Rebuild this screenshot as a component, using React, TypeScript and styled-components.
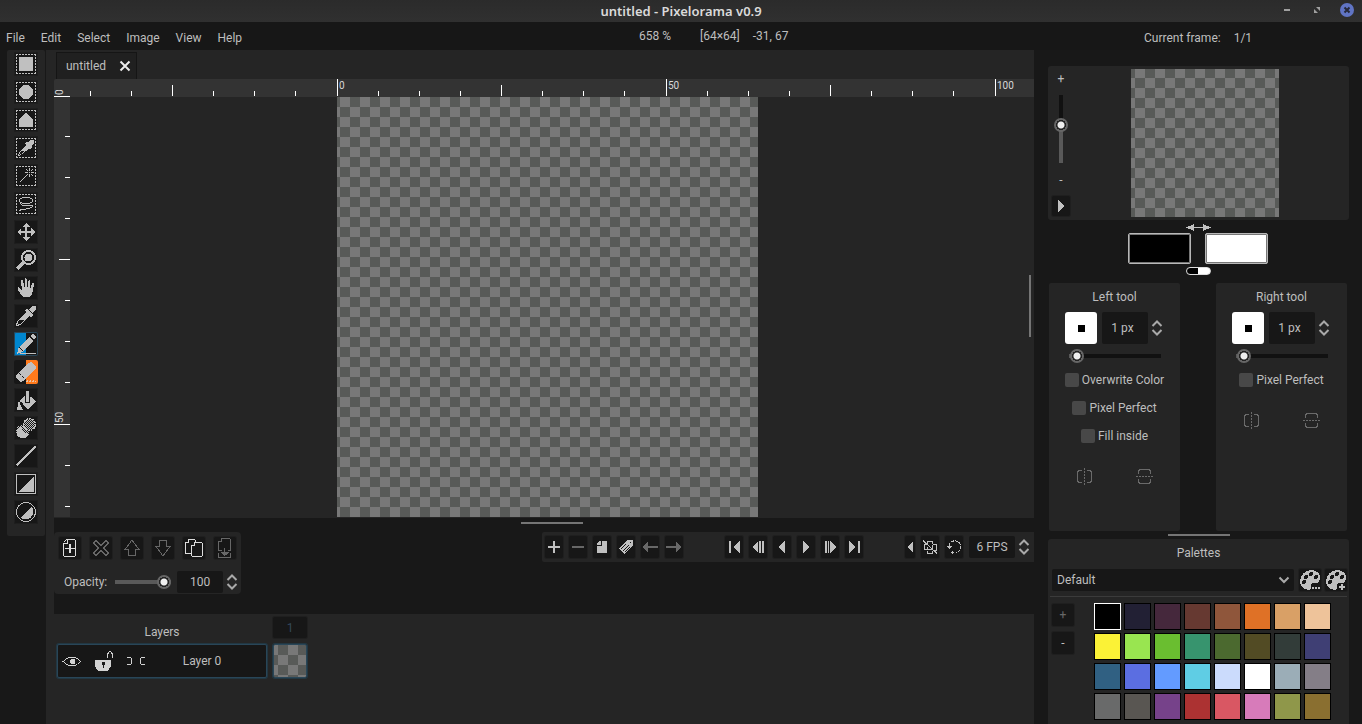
import React, { useState } from "react";
import styled, { createGlobalStyle, css } from "styled-components";

const c = {
  base: "#181818",
  panel: "#252525",
  well: "#171717",
  ruler: "#333333",
  icon: "#c0c0c0",
  dim: "#676767",
  text: "#bebebe",
  accent: "#294658",
  edge: "#1f1f1f",
};

const checker = (x: number, y: number) =>
  `conic-gradient(#787878 25%, #585a58 0 50%, #787878 0 75%, #585a58 0) ${x}px ${y}px / 20px 20px`;

const GlobalStyle = createGlobalStyle`
  * { box-sizing: border-box; }
  body { margin: 0; background: ${c.base}; }
  body, button, input, select { font: 12px/16px Roboto, "Noto Sans", sans-serif; color: ${c.text}; }
  button { padding: 0; border: 0; background: none; }
  input { margin: 0; }
  svg { display: block; }
`;

/* ---------- window frame ---------- */

const Window = styled.div`
  display: flex;
  flex-direction: column;
  height: 100vh;
  overflow: hidden;
  background: ${c.base};
`;

const TitleBar = styled.header`
  display: grid;
  grid-template-columns: 1fr auto 1fr;
  align-items: center;
  height: 22px;
  flex: none;
  background: linear-gradient(#2b2b2b, #303030);
`;

const WindowTitle = styled.h1`
  grid-column: 2;
  margin: 0;
  font: 600 13px/22px "Noto Sans", "Open Sans", sans-serif;
  color: #dadada;
`;

const WindowButtons = styled.div`
  display: flex;
  justify-content: flex-end;
  gap: 14px;
  padding-right: 7px;
  margin-top: -2px;
`;

const MenuBar = styled.div`
  display: flex;
  align-items: center;
  height: 28px;
  flex: none;
  background: ${c.well};
`;

const Menu = styled.nav`
  display: flex;
  flex: 1;
  gap: 16px;
  padding: 4px 0 0 6px;
`;

const Status = styled.div`
  display: flex;
  gap: 13px;
  flex: 0 0 395px;
  white-space: nowrap;
`;

const Zoom = styled.span`
  margin-right: 16px;
`;

const FrameStatus = styled.div`
  display: flex;
  gap: 13px;
  flex: 0 0 328px;
  padding: 4px 0 0 110px;
`;

const Workspace = styled.div`
  display: flex;
  flex: 1;
  min-height: 0;
`;

/* ---------- shared controls ---------- */

const Well = styled.button<{ $w?: number; $h?: number }>`
  display: flex;
  align-items: center;
  justify-content: center;
  flex: none;
  width: ${(p) => p.$w ?? 22}px;
  height: ${(p) => p.$h ?? 22}px;
  border-radius: 2px;
  background: ${c.well};
  color: ${c.icon};
  box-shadow: 0 0 0 1px ${c.edge};
  &:disabled { color: ${c.dim}; }
`;

const SpinBox = styled.div`
  display: flex;
  align-items: center;
  gap: 2px;
`;

const SpinInput = styled.input<{ $h?: number; $shift?: number }>`
  width: 46px;
  height: ${(p) => p.$h ?? 22}px;
  padding: 0 ${(p) => p.$shift ?? 0}px 0 0;
  border: 0;
  border-radius: 2px;
  background: ${c.well};
  text-align: center;
`;

const SpinArrows = styled.button`
  display: grid;
  place-items: center;
  width: 14px;
  height: 22px;
  color: #a9a9a9;
`;

const Range = styled.input<{ $fill: number; $vertical?: boolean }>`
  appearance: none;
  background: none;
  ${(p) =>
    p.$vertical
      ? css`writing-mode: vertical-lr; direction: rtl; width: 14px; height: 68px;`
      : css`width: 100%; height: 14px;`}
  &::-webkit-slider-runnable-track {
    ${(p) => (p.$vertical ? "width: 4px; height: 100%;" : "height: 4px; width: 100%;")}
    background: linear-gradient(
      ${(p) => (p.$vertical ? "to top" : "to right")},
      #595959 ${(p) => p.$fill}%,
      #111111 ${(p) => p.$fill}%
    );
  }
  &::-webkit-slider-thumb {
    appearance: none;
    width: 14px;
    height: 14px;
    margin: ${(p) => (p.$vertical ? "0 -5px" : "-5px 0")};
    border-radius: 50%;
    background: radial-gradient(circle, #eeeeee 3px, #222222 4px, #222222 5px, #666666 5px, #666666 7px);
  }
`;

const Grabber = styled.div<{ $h: number; $top: number; $inset?: number }>`
  display: flex;
  justify-content: center;
  flex: none;
  height: ${(p) => p.$h}px;
  padding: ${(p) => p.$top}px 0 0 ${(p) => p.$inset ?? 0}px;
  &::before {
    content: "";
    width: 62px;
    height: 2px;
    background: #757575;
  }
`;

/* ---------- tool strip ---------- */

const ToolStrip = styled.aside`
  display: flex;
  flex-direction: column;
  align-self: flex-start;
  align-items: center;
  gap: 4px;
  flex: none;
  width: 38px;
  margin: 0 1px 0 7px;
  padding: 2px 0 12px;
  border-radius: 2px;
  background: ${c.panel};
`;

const ToolButton = styled.button<{ $slot?: "left" | "right" }>`
  width: 24px;
  height: 24px;
  border-radius: 2px;
  color: ${c.icon};
  background: ${(p) =>
    p.$slot === "left"
      ? `linear-gradient(to right, #0086cf 50%, ${c.well} 50%)`
      : p.$slot === "right"
      ? `linear-gradient(to right, ${c.well} 50%, #ff7a1c 50%)`
      : c.well};
  box-shadow: inset 0 0 0 1px ${(p) => (p.$slot === "left" ? c.accent : p.$slot ? "transparent" : c.edge)};
`;

const Gutter = styled.div`
  flex: 0 0 8px;
  background: ${c.panel};
`;

/* ---------- canvas area ---------- */

const Center = styled.main`
  display: flex;
  flex-direction: column;
  flex: 1;
  min-width: 0;
`;

const CanvasPanel = styled.section`
  position: relative;
  display: flex;
  flex-direction: column;
  flex: 1;
  min-height: 0;
  background: ${c.panel};
`;

const Tabs = styled.div`
  display: flex;
  align-items: flex-end;
  flex: none;
  height: 29px;
  padding-left: 2px;
`;

const Tab = styled.div`
  display: flex;
  align-items: center;
  gap: 13px;
  height: 27px;
  padding: 0 5px 0 9px;
  border: 1px solid #151515;
  border-bottom: 0;
  background: #202020;
`;

const TabClose = styled.button`
  color: #ececec;
`;

const TopRuler = styled.div`
  display: flex;
  flex: none;
  height: 18px;
  background: ${c.ruler};
  border-radius: 2px 0 0 0;
  overflow: hidden;
`;

const CanvasRow = styled.div`
  display: flex;
  flex: 1;
  min-height: 0;
`;

const SideRuler = styled.div`
  flex: 0 0 16px;
  background: ${c.ruler};
  margin-bottom: 1px;
  overflow: hidden;
`;

const Viewport = styled.div`
  flex: 1;
  overflow: hidden;
  padding-left: 267px;
`;

const Artwork = styled.div`
  width: 421px;
  height: 420px;
  background: ${checker(-7, 0)};
`;

const SideGrabber = styled.div`
  position: absolute;
  right: 3px;
  top: 225px;
  width: 2px;
  height: 62px;
  background: #757575;
`;

/* ---------- timeline ---------- */

const TimelineTop = styled.section`
  display: flex;
  align-items: flex-start;
  justify-content: space-between;
  flex: none;
  height: 82px;
`;

const LayerTools = styled.div`
  width: 187px;
  padding: 5px 5px 1px;
  border-radius: 4px;
  background: ${c.panel};
`;

const LayerButtons = styled.div`
  display: flex;
  justify-content: space-between;
  margin-bottom: 12px;
`;

const OpacityRow = styled.div`
  display: flex;
  align-items: center;
  padding-left: 5px;
  margin-right: -6px;
  white-space: nowrap;
`;

const OpacitySlider = styled.div`
  display: flex;
  width: 56px;
  margin: 0 6px 0 8px;
`;

const AnimationBar = styled.div`
  display: flex;
  align-items: center;
  width: 492px;
  height: 30px;
  padding-left: 3px;
  border-radius: 2px 0 0 2px;
  background: ${c.panel};
`;

const ButtonGroup = styled.div`
  display: flex;
  gap: 6px;
  margin-right: 42px;
  &:last-child { margin-right: 0; }
`;

const LayersPanel = styled.section`
  display: grid;
  grid-template-columns: 210px 34px;
  grid-template-rows: 21px 34px;
  gap: 6px;
  flex: none;
  height: 110px;
  padding: 3px;
  background: ${c.panel};
`;

const LayersTitle = styled.h2`
  margin: 0;
  padding-top: 7px;
  font: inherit;
  text-align: center;
`;

const FrameButton = styled.button`
  border-radius: 2px;
  background: ${c.well};
  color: #34485a;
  box-shadow: 0 0 0 1px ${c.edge};
`;

const LayerRow = styled.div`
  display: flex;
  align-items: center;
  border: 1px solid ${c.accent};
  box-shadow: 0 0 0 1px #223742;
  border-radius: 2px;
  background: ${c.well};
`;

const LayerName = styled.span`
  flex: 1;
  padding-right: 16px;
  text-align: center;
`;

const LayerToggle = styled.button`
  width: 27px;
  margin-right: 5px;
  display: grid;
  place-items: center;
  color: #d2d2d2;
`;

const Cel = styled.button`
  border: 1px solid ${c.accent};
  box-shadow: 0 0 0 1px #223742;
  border-radius: 2px;
  background: ${checker(-16, 0)};
`;

/* ---------- right column ---------- */

const RightColumn = styled.aside`
  display: flex;
  flex-direction: column;
  flex: 0 0 301px;
  margin: 16px 13px 0 14px;
`;

const Preview = styled.section`
  display: flex;
  height: 154px;
  flex: none;
  padding: 3px 4px;
  border-radius: 3px;
  background: ${c.panel};
`;

const PreviewSide = styled.div`
  display: flex;
  flex-direction: column;
  align-items: center;
  width: 18px;
  padding-top: 2px;
  text-align: center;
`;

const PreviewSlider = styled.div`
  margin: 8px 0 9px;
  height: 68px;
`;

const PreviewImage = styled.div`
  width: 148px;
  height: 148px;
  margin-left: 61px;
  background: ${checker(-6, -1)};
`;

const PlayGap = styled.div`
  margin-top: 8px;
`;

const ColorPickers = styled.section`
  display: flex;
  flex-direction: column;
  align-items: center;
  flex: none;
  height: 63px;
  padding-top: 3px;
`;

const ColorPair = styled.div`
  display: flex;
  gap: 14px;
  margin: 1px 1px 3px 0;
`;

const ColorButton = styled.button<{ $color: string }>`
  width: 63px;
  height: 31px;
  border: 1px solid #b8b8b8;
  box-shadow: inset 0 0 0 1px #777777;
  border-radius: 2px;
  background: ${(p) => p.$color};
`;

const DefaultColors = styled.button`
  width: 25px;
  height: 8px;
  border: 1px solid #dddddd;
  border-radius: 4px;
  background: linear-gradient(to right, #000 48%, #fff 48%);
`;

const ToolPanels = styled.div`
  display: flex;
  justify-content: space-between;
  flex: 1;
  padding: 0 2px 0 1px;
`;

const ToolPanel = styled.section`
  display: flex;
  flex-direction: column;
  align-items: center;
  width: 131px;
  border-radius: 2px;
  background: ${c.panel};
`;

const PanelTitle = styled.h2`
  margin: 0;
  padding: 6px 0 7px;
  font: inherit;
`;

const BrushRow = styled.div`
  display: flex;
  gap: 5px;
`;

const BrushButton = styled.button`
  display: grid;
  place-items: center;
  width: 32px;
  height: 32px;
  border-radius: 3px;
  background: #ffffff;
`;

const BrushSlider = styled.div`
  display: flex;
  width: 92px;
  margin: 5px 0 7px;
`;

const Options = styled.div`
  display: flex;
  flex-direction: column;
  align-items: center;
  gap: 8px;
`;

const CheckLabel = styled.label`
  display: flex;
  align-items: center;
  gap: 3px;
  height: 20px;
`;

const CheckInput = styled.input`
  appearance: none;
  width: 14px;
  height: 14px;
  border-radius: 2px;
  background: #484848;
  &:checked { background: #8a8a8a; }
`;

const MirrorRow = styled.div`
  display: flex;
  gap: 43px;
  margin-top: 22px;
`;

const MirrorButton = styled.button`
  color: #6a6a6a;
`;

const Palettes = styled.section`
  flex: none;
  height: 185px;
  padding: 0 2px;
  border-radius: 3px 3px 0 0;
  background: ${c.panel};
`;

const PaletteTitle = styled.h2`
  margin: 0;
  padding: 6px 0 8px;
  font: inherit;
  text-align: center;
`;

const PaletteBar = styled.div`
  display: flex;
  gap: 4px;
  padding: 0 0 5px 2px;
  border-bottom: 1px solid #3b3b3b;
`;

const SelectBox = styled.div`
  position: relative;
  flex: 1;
  margin-right: 1px;
`;

const Select = styled.select`
  appearance: none;
  width: 100%;
  height: 22px;
  padding: 0 5px;
  border: 0;
  border-radius: 2px;
  background: ${c.well};
`;

const SelectArrow = styled.svg`
  position: absolute;
  right: 4px;
  top: 7px;
  pointer-events: none;
`;

const PaletteBody = styled.div`
  display: flex;
  gap: 20px;
  padding: 6px 2px 0;
`;

const PaletteButtons = styled.div`
  display: flex;
  flex-direction: column;
  gap: 6px;
  padding-top: 1px;
`;

const Swatches = styled.div`
  display: grid;
  grid-template-columns: repeat(8, 27px);
  grid-auto-rows: 27px;
  gap: 3px;
`;

const Swatch = styled.button<{ $color: string; $active: boolean }>`
  border: 1px solid ${(p) => (p.$active ? "#ffffff" : "#000000")};
  background: ${(p) => p.$color};
`;

/* ---------- icons ---------- */

type SvgProps = { w?: number; h?: number; smooth?: boolean; children: React.ReactNode };

const Svg = ({ w = 24, h = 24, smooth, children }: SvgProps) => (
  <svg
    width={w}
    height={h}
    viewBox={`0 0 ${w} ${h}`}
    fill="none"
    shapeRendering={smooth ? "auto" : "crispEdges"}
    aria-hidden="true"
  >
    {children}
  </svg>
);

const Marquee = () => (
  <path
    d="M2 2.500h20M2 21.500h20M2.500 2v20M21.500 2v20"
    stroke="currentColor"
    strokeDasharray="2 1"
  />
);

type Tool = { name: string; slot?: "left" | "right"; icon: React.ReactNode };

const tools: Tool[] = [
  { name: "Rectangular selection", icon: <><Marquee /><path d="M5 5h14v14H5z" fill="currentColor" /></> },
  { name: "Elliptical selection", icon: <><Marquee /><circle cx="12" cy="12" r="7" fill="currentColor" /></> },
  { name: "Polygonal selection", icon: <><Marquee /><path d="M12 4.500L19 11v8H5v-8z" fill="currentColor" /></> },
  {
    name: "Select by color",
    icon: (
      <>
        <Marquee />
        <path d="M14 7l2.500-3H19l1 1v2.500L17 10z M11 7l2-1.500 5.500 5.500-1.500 2h-1.500z" fill="currentColor" />
        <path d="M12.500 9.500l-7 7-1 3 3-1 7-7" stroke="currentColor" />
        <path d="M12 9l3 3-3 3H8z" fill="currentColor" />
      </>
    ),
  },
  {
    name: "Magic wand",
    icon: (
      <>
        <Marquee />
        <path d="M5.500 18.500l8-8M15.500 4v3M15.500 10v3M11 8.500h3M17 8.500h3M12 5l2 2M17 10l2 2M17 7l2-2" stroke="currentColor" />
        <path d="M15 8h1v1h-1z" fill="currentColor" />
      </>
    ),
  },
  {
    name: "Lasso",
    icon: (
      <>
        <Marquee />
        <path
          d="M12 5.500c4 0 6.500 1 6.500 3s-3 3-6.500 3-6.500-1-6.500-3 3-3 6.500-3zM6 10c0 3 3 4 7 4 3 0 5-1 5.500 0s-2 2.500-6 3c-3 .5-5 0-7 1.500"
          stroke="currentColor"
        />
      </>
    ),
  },
  {
    name: "Move",
    icon: (
      <path
        d="M12 3l4 4h-3v4h4V8l4 4-4 4v-3h-4v4h3l-4 4-4-4h3v-4H7v3l-4-4 4-4v3h4V7H8z"
        fill="currentColor"
      />
    ),
  },
  {
    name: "Zoom",
    icon: (
      <>
        <path d="M10.500 13.500L3 21" stroke="currentColor" strokeWidth="3" />
        <circle cx="14.500" cy="9.500" r="6.500" stroke="currentColor" strokeWidth="2" />
        <circle cx="14.500" cy="9.500" r="4" fill="currentColor" />
      </>
    ),
  },
  {
    name: "Pan",
    icon: (
      <path
        d="M7 5c0-1.500 2-1.500 2.200 0L10 11h.6V3.500c0-1.600 2.300-1.600 2.400 0V11h.6l.8-6c.2-1.500 2.200-1.200 2 .4L16 12h.6l1.600-4.500c.6-1.300 2.300-.7 2 .8L18.500 16c-.6 3-2.500 5.500-5.500 5.500-3.500 0-5.500-2-7-4.500l-2.500-4c-.5-1.500 1-2.200 2.200-1.200L8 14z"
        fill="currentColor"
      />
    ),
  },
  {
    name: "Color picker",
    icon: (
      <>
        <path d="M15 6l3-4h3l1 1v3l-4 3z M11 6l2-1.500L19.500 11 18 13h-1.500z" fill="currentColor" />
        <path d="M12.500 9.500l-9 8-1 4 4-1 9-9" stroke="currentColor" />
        <path d="M12 8l4 4-5 4H6z" fill="currentColor" />
      </>
    ),
  },
  {
    name: "Pencil",
    slot: "left",
    icon: (
      <>
        <path d="M19 2l3 3-2 3-4-4zM15 5l4 4L8 20l-5 2 1.500-6z" fill="currentColor" />
        <path d="M5.500 15.500l4 4" stroke={c.well} />
        <path d="M6 21.500h16" stroke="currentColor" />
      </>
    ),
  },
  {
    name: "Eraser",
    slot: "right",
    icon: (
      <>
        <path d="M15.500 2.500l2-.5 4.500 4.500v2L9.500 21 6 22l-4-4v-3z" fill="currentColor" />
        <path d="M5 13l6 6" stroke={c.well} strokeDasharray="1 1" />
        <path d="M12 21.500h10" stroke="#e8c4a8" strokeDasharray="2 1" />
        <path d="M13 20.500h9" stroke="#e8c4a8" strokeDasharray="1 2" />
      </>
    ),
  },
  {
    name: "Bucket",
    icon: (
      <>
        <path d="M13 5.500l9 8-8 8-8.500-8.500zM5 12l1 4 3 6H3z" fill="currentColor" />
        <path d="M11.500 4v10h4V4" stroke={c.well} />
        <path d="M12 3h3v10h-3z" fill="currentColor" />
        <path d="M6.500 14l4.500 5-1.500 2.500" stroke={c.well} />
      </>
    ),
  },
  {
    name: "Shading",
    icon: (
      <>
        <defs>
          <pattern id="dither" width="2" height="2" patternUnits="userSpaceOnUse">
            <path d="M0 0h1v1H0zM1 1h1v1H1z" fill={c.icon} />
          </pattern>
        </defs>
        <circle cx="15.500" cy="8.500" r="6" fill="url(#dither)" stroke={c.icon} strokeDasharray="2 1" />
        <circle cx="8.500" cy="15.500" r="6.500" fill="url(#dither)" />
        <path d="M3 13l4-3 2 6 6 2-4 4H6l-3-3z" fill={c.icon} />
      </>
    ),
  },
  { name: "Line", icon: <path d="M2.500 21.500l19-19" stroke="currentColor" strokeWidth="2" /> },
  {
    name: "Rectangle",
    icon: <><rect x="2.500" y="2.500" width="19" height="19" stroke="currentColor" /><path d="M20 4v16H4z" fill="currentColor" /></>,
  },
  {
    name: "Ellipse",
    icon: <><circle cx="12" cy="12" r="9.500" stroke="currentColor" /><path d="M17.500 6.500a7.800 7.800 0 0 1-11 11z" fill="currentColor" /></>,
  },
];

const Arrows = () => (
  <Svg w={14} h={18} smooth>
    <path d="M2.500 7L7 2.500 11.500 7M2.500 11L7 15.500 11.500 11" stroke="currentColor" strokeWidth="2" />
  </Svg>
);

const layerButtons = [
  {
    name: "Add layer",
    icon: (
      <>
        <path d="M8 2.500h7l1.500 1v15l-1.500 1H6l-1.500-1V6M5 6.500h3.500V3M5 5l3-3" stroke="#dcdcdc" />
        <path d="M10 7h2v4h4v1h-4v4h-2v-4H6v-1h4z" fill="#dcdcdc" />
      </>
    ),
  },
  {
    name: "Remove layer", off: true,
    icon: <path d="M6 3.500l5 5 5-5 2.500 2.500-5 5 5 5-2.500 2.500-5-5-5 5L3.500 16l5-5-5-5z" stroke="currentColor" />,
  },
  {
    name: "Move layer up", off: true,
    icon: <path d="M11 3l7 9.500h-3.500v6h-7v-6H4z" stroke="currentColor" />,
  },
  {
    name: "Move layer down", off: true,
    icon: <path d="M11 19l7-9.500h-3.500v-6h-7v6H4z" stroke="currentColor" />,
  },
  {
    name: "Clone layer",
    icon: (
      <path
        d="M6 2.500h5l1.500 1V5M2.500 6v10l1.500 .500h3.500M2 5.500h3.500V2M12 5.500h6.500l1 1v12l-1 1h-9l-1-1V9M8 8.500h3.500V5"
        stroke="#dcdcdc"
      />
    ),
  },
  {
    name: "Merge layer down", off: true,
    icon: (
      <path
        d="M8 1.500h7l1.500 1v11h-3M8 13.500H4.500V5M4 4.500h3.500V1M4.500 16v4l1 .500h10l1-.500v-4M10.500 11v8M7 15.500h8M8 16.500h6M9 17.500h4"
        stroke="currentColor"
      />
    ),
  },
];

const A = ({ d }: { d: string }) => (
  <Svg w={18} h={22}>
    <path d={d} fill="currentColor" />
  </Svg>
);

const frameButtons = [
  { name: "Add frame", icon: <A d="M8 5h2v5h5v2h-5v5H8v-5H3v-2h5z" /> },
  { name: "Remove frame", off: true, icon: <A d="M3 10h12v2H3z" /> },
  { name: "Clone frame", icon: <A d="M9 5h5v12H4V10h5zM6 5h2v4H4V7z" /> },
  {
    name: "Frame tag",
    icon: (
      <Svg w={18} h={22}>
        <path d="M10 4h6v6l-9 8-5-5z" fill="currentColor" />
        <path d="M4 13l5-5M6 15l6-6M8 16l5-5" stroke={c.well} />
        <path d="M13 6h1v1h-1z" fill={c.well} />
      </Svg>
    ),
  },
  { name: "Move frame left", off: true, icon: <A d="M2 11l5-6v5h10v2H7v5z" /> },
  { name: "Move frame right", off: true, icon: <A d="M16 11l-5-6v5H1v2h10v5z" /> },
];

const playButtons = [
  { name: "First frame", icon: <A d="M4 5h2v12H4zM15 5v12l-7-6z" /> },
  { name: "Previous frame", icon: <A d="M9 5v12l-6-6zM10 5h2v12h-2zM13 5h2v12h-2z" /> },
  { name: "Play backwards", icon: <A d="M12 5v12l-7-6z" /> },
  { name: "Play forward", icon: <A d="M6 5v12l7-6z" /> },
  { name: "Next frame", icon: <A d="M9 5v12l7-6zM4 5h2v12H4zM7 5h1v12H7z" /> },
  { name: "Last frame", icon: <A d="M4 5v12l7-6zM13 5h2v12h-2z" /> },
];

const Mirror = ({ vertical }: { vertical?: boolean }) => (
  <Svg w={17} h={17}>
    <g transform={vertical ? "rotate(90 8.500 8.500)" : undefined} stroke="currentColor">
      <path d="M6 2.500H3L1.500 4v9L3 14.500h3M11 2.500h3L15.500 4v9L14 14.500h-3" />
      <path d="M8.500 0v17" strokeDasharray="2 1" />
    </g>
  </Svg>
);

const PaletteIcon = ({ children }: { children: React.ReactNode }) => (
  <Svg w={22} h={22}>
    <path
      d="M12 1c5 0 9 3 9 7 0 3-1 6-3.500 6H14c-2 0-2 2-1.500 3.500C13 20 12 21 10 21c-5 0-9-4-9-9S6 1 12 1z"
      fill="currentColor"
    />
    <g fill={c.well}>
      <circle cx="5" cy="13" r="2" /><circle cx="7" cy="8" r="2" />
      <circle cx="12" cy="5" r="2" /><circle cx="17" cy="8" r="2" />
    </g>
    {children}
  </Svg>
);

/* ---------- rulers ---------- */

const STEP = 41.125;
const ticks = (origin: number, from: number, to: number) =>
  Array.from({ length: to - from + 1 }, (_, i) => {
    const n = from + i;
    return { n, at: Math.floor(origin + n * STEP) };
  });
const tickLength = (n: number) => (n % 8 === 0 ? 17 : n % 4 === 0 ? 11 : 5);

const RulerText = styled.text`
  font-size: 10px;
  fill: #d8d8d8;
`;

const HorizontalRuler = () => (
  <svg width="100%" height="18" aria-hidden="true">
    {ticks(283, -6, 16).map(({ n, at }) => (
      <React.Fragment key={n}>
        <rect x={at} y={17 - tickLength(n)} width="1" height={tickLength(n)} fill="#ffffff" />
        {n % 8 === 0 && <RulerText x={at + 2} y="10">{(n / 8) * 50}</RulerText>}
      </React.Fragment>
    ))}
    <rect x="0" y="17" width="16" height="1" fill="#ffffff" />
    <RulerText transform="translate(9 16) rotate(-90)">0</RulerText>
  </svg>
);

const VerticalRuler = () => (
  <svg width="16" height="420" aria-hidden="true">
    {ticks(-1, 1, 10).map(({ n, at }) => (
      <React.Fragment key={n}>
        <rect x={16 - tickLength(n)} y={at - 1} width={tickLength(n)} height="1" fill="#ffffff" />
        {n % 8 === 0 && <RulerText transform={`translate(9 ${at - 2}) rotate(-90)`}>{(n / 8) * 50}</RulerText>}
      </React.Fragment>
    ))}
  </svg>
);

/* ---------- tool options ---------- */

const ToolOptions = ({ title, options }: { title: string; options: string[] }) => {
  const [size, setSize] = useState("1 px");
  return (
    <ToolPanel>
      <PanelTitle>{title}</PanelTitle>
      <BrushRow>
        <BrushButton aria-label={`${title} brush`}>
          <svg width="7" height="7"><path d="M0 0h7v7H0z" /></svg>
        </BrushButton>
        <SpinBox>
          <SpinInput $h={32} $shift={5} aria-label={`${title} size`} value={size} onChange={(e) => setSize(e.target.value)} />
          <SpinArrows aria-label="Change size"><Arrows /></SpinArrows>
        </SpinBox>
      </BrushRow>
      <BrushSlider>
        <Range type="range" $fill={5} min={0} max={100} defaultValue={2} aria-label={`${title} size slider`} />
      </BrushSlider>
      <Options>
        {options.map((o) => (
          <CheckLabel key={o}><CheckInput type="checkbox" />{o}</CheckLabel>
        ))}
      </Options>
      <MirrorRow>
        <MirrorButton aria-label="Horizontal mirror"><Mirror /></MirrorButton>
        <MirrorButton aria-label="Vertical mirror"><Mirror vertical /></MirrorButton>
      </MirrorRow>
    </ToolPanel>
  );
};

const palette = [
  "#000000", "#222034", "#45283c", "#663931", "#8f563b", "#df7126", "#d9a066", "#eec39a",
  "#fbf236", "#99e550", "#6abe30", "#37946e", "#4b692f", "#524b24", "#323c39", "#3f3f74",
  "#306082", "#5b6ee1", "#639bff", "#5fcde4", "#cbdbfc", "#ffffff", "#9badb7", "#847e87",
  "#696a6a", "#595652", "#76428a", "#ac3232", "#d95763", "#d77bba", "#8f974a", "#8a6f30",
];

export default function App() {
  const [active, setActive] = useState(0);
  return (
    <>
      <GlobalStyle />
      <Window>
        <TitleBar>
          <WindowTitle>untitled - Pixelorama v0.9</WindowTitle>
          <WindowButtons>
            <button aria-label="Minimize"><Svg w={16} h={16}><path d="M5 7h6v2H5z" fill="#a0a0a0" /></Svg></button>
            <button aria-label="Restore"><Svg w={16} h={16} smooth><path d="M7 5h4v4zM5 7v4h4z" fill="#a0a0a0" /></Svg></button>
            <button aria-label="Close">
              <Svg w={16} h={16} smooth>
                <circle cx="8" cy="8" r="7" fill="#6074c4" />
                <path d="M5.500 5.500l5 5m0-5l-5 5" stroke="#26293a" strokeWidth="2" />
              </Svg>
            </button>
          </WindowButtons>
        </TitleBar>

        <MenuBar>
          <Menu>
            {["File", "Edit", "Select", "Image", "View", "Help"].map((m) => <button key={m}>{m}</button>)}
          </Menu>
          <Status><Zoom>658 %</Zoom><span>[64×64]</span><span>-31, 67</span></Status>
          <FrameStatus><span>Current frame:</span><span>1/1</span></FrameStatus>
        </MenuBar>

        <Workspace>
          <ToolStrip>
            {tools.map((t) => (
              <ToolButton key={t.name} $slot={t.slot} aria-label={t.name}><Svg>{t.icon}</Svg></ToolButton>
            ))}
          </ToolStrip>
          <Gutter />

          <Center>
            <CanvasPanel>
              <Tabs>
                <Tab>
                  untitled
                  <TabClose aria-label="Close tab">
                    <Svg w={12} h={12} smooth><path d="M1.500 1.500l9 9m0-9l-9 9" stroke="currentColor" strokeWidth="2" /></Svg>
                  </TabClose>
                </Tab>
              </Tabs>
              <TopRuler><HorizontalRuler /></TopRuler>
              <CanvasRow>
                <SideRuler><VerticalRuler /></SideRuler>
                <Viewport><Artwork /></Viewport>
              </CanvasRow>
              <SideGrabber />
            </CanvasPanel>

            <Grabber $h={14} $top={4} $inset={16} />

            <TimelineTop>
              <LayerTools>
                <LayerButtons>
                  {layerButtons.map((b) => (
                    <Well key={b.name} aria-label={b.name} disabled={b.off}><Svg w={22} h={22}>{b.icon}</Svg></Well>
                  ))}
                </LayerButtons>
                <OpacityRow>
                  <label htmlFor="opacity">Opacity:</label>
                  <OpacitySlider><Range id="opacity" type="range" $fill={100} defaultValue={100} /></OpacitySlider>
                  <SpinBox>
                    <SpinInput aria-label="Opacity value" defaultValue="100" />
                    <SpinArrows aria-label="Change opacity"><Arrows /></SpinArrows>
                  </SpinBox>
                </OpacityRow>
              </LayerTools>

              <AnimationBar>
                <ButtonGroup>
                  {frameButtons.map((b) => (
                    <Well key={b.name} $w={18} aria-label={b.name} disabled={b.off}>{b.icon}</Well>
                  ))}
                </ButtonGroup>
                <ButtonGroup>
                  {playButtons.map((b) => <Well key={b.name} $w={18} aria-label={b.name}>{b.icon}</Well>)}
                </ButtonGroup>
                <ButtonGroup>
                  <Well $w={10} aria-label="Onion skinning options">
                    <Svg w={10} h={22}><path d="M8 5v12l-6-6z" fill="currentColor" /></Svg>
                  </Well>
                  <Well $w={18} aria-label="Onion skinning">
                    <Svg w={18} h={22}>
                      <path
                        d="M6.500 8V5.500h5V8M12 8.500h3.500v6H12M11.500 15v2.500h-5V15M6 13.500H3.500v-5H6M6.500 11v2.500h5V9M2 4.500l14 13"
                        stroke="currentColor"
                      />
                    </Svg>
                  </Well>
                  <Well $w={18} aria-label="Loop">
                    <Svg w={18} h={22}>
                      <path d="M4 9.500A6 6 0 1 1 11 16.700" stroke="currentColor" strokeDasharray="3 1" />
                      <path d="M2 10h5v1H6v1H5v1H4v-1H3v-1H2zM6 16h3v1H6zM7 15h1v3H7z" fill="currentColor" />
                    </Svg>
                  </Well>
                  <SpinBox>
                    <SpinInput aria-label="Frames per second" defaultValue="6 FPS" />
                    <SpinArrows aria-label="Change FPS"><Arrows /></SpinArrows>
                  </SpinBox>
                </ButtonGroup>
              </AnimationBar>
            </TimelineTop>

            <LayersPanel>
              <LayersTitle>Layers</LayersTitle>
              <FrameButton>1</FrameButton>
              <LayerRow>
                <LayerToggle aria-label="Visible">
                  <Svg w={20} h={12}>
                    <path d="M0 6.500h1.500l3-3 3-1h5l3 1 3 3-3 3-3 1h-5l-3-1-3-3" stroke="currentColor" />
                    <path d="M9 4h3l1 1v3l-1 1H9L8 8V5z" fill="currentColor" />
                  </Svg>
                </LayerToggle>
                <LayerToggle aria-label="Unlocked">
                  <Svg w={18} h={20}>
                    <path d="M0 9h16v6l-3 5H3l-3-5z" fill="currentColor" />
                    <path d="M12.500 7V3l2-2.500h1l2 2.500v4" stroke="currentColor" />
                    <path d="M7 11h3v3H9v3H8v-3H7z" fill={c.well} />
                  </Svg>
                </LayerToggle>
                <LayerToggle aria-label="Unlinked">
                  <Svg w={18} h={9}>
                    <path d="M0 .500h3l1.500 1v5l-1.500 1H0M18 .500h-3l-1.500 1v5l1.500 1H18" stroke="currentColor" />
                  </Svg>
                </LayerToggle>
                <LayerName>Layer 0</LayerName>
              </LayerRow>
              <Cel aria-label="Layer 0, frame 1" />
            </LayersPanel>
          </Center>

          <RightColumn>
            <Preview>
              <PreviewSide>
                +
                <PreviewSlider>
                  <Range type="range" $vertical $fill={56} defaultValue={57} aria-label="Preview zoom" />
                </PreviewSlider>
                -
                <PlayGap>
                  <Well $w={18} $h={20} aria-label="Play preview"><A d="M6 5v12l7-6z" /></Well>
                </PlayGap>
              </PreviewSide>
              <PreviewImage />
            </Preview>

            <ColorPickers>
              <button aria-label="Swap colors">
                <Svg w={25} h={9}><path d="M0 4.500L8 1v7zM25 4.500L17 1v7zM8 4h9v1H8z" fill={c.icon} /></Svg>
              </button>
              <ColorPair>
                <ColorButton $color="#000000" aria-label="Left color" />
                <ColorButton $color="#ffffff" aria-label="Right color" />
              </ColorPair>
              <DefaultColors aria-label="Default colors" />
            </ColorPickers>

            <ToolPanels>
              <ToolOptions title="Left tool" options={["Overwrite Color", "Pixel Perfect", "Fill inside"]} />
              <ToolOptions title="Right tool" options={["Pixel Perfect"]} />
            </ToolPanels>

            <Grabber $h={8} $top={3} />

            <Palettes>
              <PaletteTitle>Palettes</PaletteTitle>
              <PaletteBar>
                <SelectBox>
                  <Select aria-label="Palette"><option>Default</option></Select>
                  <SelectArrow width="12" height="8" viewBox="0 0 12 8" fill="none">
                    <path d="M1.500 1.500L6 6l4.500-4.500" stroke="#a9a9a9" strokeWidth="2" />
                  </SelectArrow>
                </SelectBox>
                <Well aria-label="Edit palette">
                  <PaletteIcon>
                    <path d="M12 17h10v4H12z" fill={c.well} />
                    <path d="M13 18h2v2h-2zM16 18h2v2h-2zM19 18h2v2h-2z" fill={c.icon} />
                  </PaletteIcon>
                </Well>
                <Well aria-label="Add palette">
                  <PaletteIcon>
                    <path d="M15 14h4v2h3v4h-3v2h-4v-2h-3v-4h3z" fill={c.well} />
                    <path d="M16 15h2v2h2v2h-2v2h-2v-2h-2v-2h2z" fill={c.icon} />
                  </PaletteIcon>
                </Well>
              </PaletteBar>
              <PaletteBody>
                <PaletteButtons>
                  <Well disabled>+</Well>
                  <Well>-</Well>
                </PaletteButtons>
                <Swatches>
                  {palette.map((p, i) => (
                    <Swatch key={p} $color={p} $active={i === active} aria-label={`Color ${p}`} onClick={() => setActive(i)} />
                  ))}
                </Swatches>
              </PaletteBody>
            </Palettes>
          </RightColumn>
        </Workspace>
      </Window>
    </>
  );
}
